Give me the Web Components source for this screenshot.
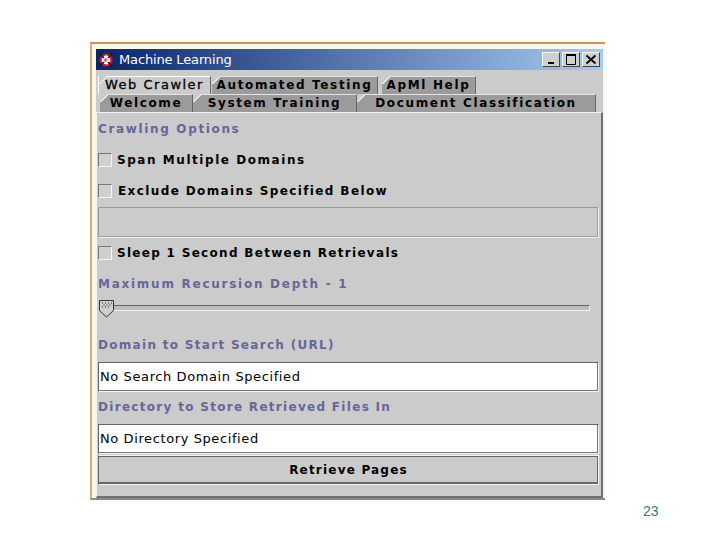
<!DOCTYPE html>
<html>
<head>
<meta charset="utf-8">
<title>Machine Learning</title>
<style>
  html, body { margin: 0; background: #fff; }
  body { width: 720px; height: 540px; overflow: hidden; font-family: "DejaVu Sans", sans-serif; }
  .slide { display: flex; flex-direction: column; padding: 42px 0 0 90px; }
  .number { margin: 3px 0 0 553px; font: 14px/16px "Liberation Sans", sans-serif; color: #2e7f86; }
</style>
</head>
<body>
<div class="slide">
  <ml-window title-text="Machine Learning">
    <ml-tabs>
      <ml-tab slot="top" selected style="margin-left:2px;width:113px">Web Crawler</ml-tab>
      <ml-tab slot="top" style="margin-left:1px;width:166px">Automated Testing</ml-tab>
      <ml-tab slot="top" style="margin-left:4px;width:94px">ApMl Help</ml-tab>
      <ml-tab slot="bottom" style="margin-left:4px;width:93px">Welcome</ml-tab>
      <ml-tab slot="bottom" style="width:164px">System Training</ml-tab>
      <ml-tab slot="bottom" style="width:239px">Document Classification</ml-tab>
    </ml-tabs>
    <ml-panel>
      <ml-heading style="height:31px;letter-spacing:1.65px">Crawling Options</ml-heading>
      <ml-check style="letter-spacing:1.55px">Span Multiple Domains</ml-check>
      <ml-check gap="6" style="letter-spacing:1.39px;margin-bottom:1px">Exclude Domains Specified Below</ml-check>
      <ml-field disabled></ml-field>
      <ml-check style="height:30px;letter-spacing:1.3px">Sleep 1 Second Between Retrievals</ml-check>
      <ml-heading style="height:31px;letter-spacing:1.74px">Maximum Recursion Depth - 1</ml-heading>
      <ml-slider style="margin-top:1px"></ml-slider>
      <ml-heading style="height:32px;margin-top:11px;letter-spacing:1.3px">Domain to Start Search (URL)</ml-heading>
      <ml-field style="margin-top:1px;height:30px">No Search Domain Specified</ml-field>
      <ml-heading style="height:30px;letter-spacing:1.3px">Directory to Store Retrieved Files In</ml-heading>
      <ml-field style="margin-top:2px;height:30px">No Directory Specified</ml-field>
      <ml-button>Retrieve Pages</ml-button>
    </ml-panel>
  </ml-window>
  <div class="number">23</div>
</div>

<script>
function shadow(el, html) {
  el.attachShadow({ mode: "open" }).innerHTML = html;
}

class MlWindow extends HTMLElement {
  connectedCallback() {
    const title = this.getAttribute("title-text");
    shadow(this, `
    <style>
      :host { display: block; width: 515px; height: 458px; box-sizing: border-box; background: #fbf6ea;
        border-top: 2px solid #c4965c; border-left: 2px solid #d3ac78; border-bottom: 2px solid #8a8a8a; }
      .inner { height: 100%; box-sizing: border-box; padding: 5px 2px 0 4px; display: flex; flex-direction: column; }
      .bar { height: 21px; flex: none; display: flex; align-items: center; gap: 2px; padding: 0 3px 0 2px;
        background: linear-gradient(90deg, #0a246a, #a6caf0); }
      .bar svg.logo { margin-right: 3px; }
      .name { flex: 1; color: #fff; font: 13px "DejaVu Sans", sans-serif; letter-spacing: -.15px; }
      .btn { width: 18px; height: 15px; box-sizing: border-box; background: #cfcfcf;
        border: 1px solid; border-color: #f4f4f4 #444 #444 #f4f4f4; display: flex; }
      .body { flex: 1; background: #cbcbcb; display: flex; flex-direction: column; min-height: 0; }
    </style>
    <div class="inner">
      <div class="bar">
        <svg class="logo" width="16" height="16" viewBox="0 0 16 16">
          <circle cx="8" cy="8" r="6.500" fill="#c81c28"/>
          <path d="M8 3 11.500 5 12.500 9 9.500 12.500 6 12 3.500 9 4.500 5Z" fill="#fff"/>
          <path d="M8 5.500 10 8 7 10.500 5.500 8Z" fill="#e8606a"/>
          <path d="M1.500 1.500 6 6M14.500 1.500 10 6M1.500 14.500 6 10M14.500 14.500 10 10" stroke="#3a0c14" stroke-width="1.500"/>
        </svg>
        <span class="name">${title}</span>
        <span class="btn"><svg width="16" height="13" viewBox="0 0 16 13"><path d="M5 9h6v2H5z" fill="#000"/></svg></span>
        <span class="btn"><svg width="16" height="13" viewBox="0 0 16 13"><path d="M3.500 1.500h9v10h-9z" fill="none" stroke="#000"/><path d="M3 1h10v2H3z" fill="#000"/></svg></span>
        <span class="btn"><svg width="16" height="13" viewBox="0 0 16 13"><path d="M3.500 2.500l9 8M12.500 2.500l-9 8" stroke="#000" stroke-width="1.800"/></svg></span>
      </div>
      <div class="body"><slot></slot></div>
    </div>`);
  }
}

class MlTabs extends HTMLElement {
  connectedCallback() {
    shadow(this, `
    <style>
      :host { display: block; padding-top: 6px; flex: none; }
      .row { display: flex; height: 18px; }
    </style>
    <div class="row"><slot name="top"></slot></div>
    <div class="row"><slot name="bottom"></slot></div>`);
  }
}

class MlTab extends HTMLElement {
  connectedCallback() {
    shadow(this, `
    <style>
      :host { display: block; position: relative; box-sizing: border-box; height: 100%; background: #9b9b9b; color: #000;
        border-top: 1px solid #e4e4e4; border-right: 1px solid #666;
        font: bold 12px/16px "DejaVu Sans", sans-serif; letter-spacing: 1.65px; text-align: center; white-space: nowrap; }
      :host::before { content: ""; position: absolute; left: 0; top: -1px; width: 8px; height: 8px;
        background: linear-gradient(135deg, #cbcbcb 46%, #e8e8e8 46%, #e8e8e8 58%, transparent 58%); }
      :host([selected]) { background: #cbcbcb; border-top-color: #fff; border-left: 1px solid #fff; font-size: 13px; font-weight: normal;
        letter-spacing: 1.5px; -webkit-text-stroke: .3px #000; }
    </style>
    <slot></slot>`);
  }
}

class MlPanel extends HTMLElement {
  connectedCallback() {
    shadow(this, `
    <style>
      :host { display: flex; flex-direction: column; flex: 1; box-sizing: border-box; padding: 0 2px 0 1px;
        border-top: 1px solid #f4f4f4; border-left: 1px solid #f4f4f4; border-right: 2px solid #6f6f6f; border-bottom: 2px solid #6f6f6f; min-height: 0; }
    </style>
    <slot></slot>`);
  }
}

class MlHeading extends HTMLElement {
  connectedCallback() {
    shadow(this, `
    <style>
      :host { display: flex; align-items: center; flex: none; color: #66669a;
        font: bold 12px "DejaVu Sans", sans-serif; letter-spacing: 1.5px; white-space: nowrap; }
    </style>
    <slot></slot>`);
  }
}

class MlCheck extends HTMLElement {
  connectedCallback() {
    const gap = this.getAttribute("gap") || 5;
    shadow(this, `
    <style>
      :host { display: flex; align-items: center; height: 31px; flex: none; color: #000;
        font: bold 12px "DejaVu Sans", sans-serif; letter-spacing: 1.5px; white-space: nowrap; }
      .box { width: 14px; height: 14px; box-sizing: border-box; margin-right: ${gap}px; flex: none;
        border: 1px solid; border-color: #777 #f4f4f4 #f4f4f4 #777; background: #d0d0d0; }
    </style>
    <span class="box"></span><slot></slot>`);
  }
}

class MlField extends HTMLElement {
  connectedCallback() {
    shadow(this, `
    <style>
      :host { display: flex; align-items: center; height: 31px; box-sizing: border-box; flex: none; padding: 0 0 2px 1px;
        background: #fff; color: #000; border: 1px solid; border-color: #666 #f4f4f4 #f4f4f4 #666;
        box-shadow: inset -1px -1px 0 #777; font: 13px "DejaVu Sans", sans-serif; letter-spacing: .6px; white-space: nowrap; }
      :host([disabled]) { background: #cbcbcb; border-color: #999 #f0f0f0 #f0f0f0 #999; box-shadow: inset -1px -1px 0 #a0a0a0; }
    </style>
    <slot></slot>`);
  }
}

class MlSlider extends HTMLElement {
  connectedCallback() {
    shadow(this, `
    <style>
      :host { display: block; position: relative; height: 18px; flex: none; }
      .track { position: absolute; left: 14px; right: 9px; top: 5px; height: 6px; box-sizing: border-box;
        background: #bdbdbd; border: 1px solid; border-color: #666 #eee #f2f2f2 #666; }
      svg { position: absolute; left: 0; top: 0; }
    </style>
    <div class="track"></div>
    <svg width="17" height="18" viewBox="0 0 17 18">
      <path d="M1.500 .5h14v10l-7 6.500-7-6.500z" fill="#cfcfcf" stroke="#333"/>
      <path d="M4 3h1M7 3h1M10 3h1M13 3h1M5.500 5h1M8.500 5h1M11.500 5h1M4 7h1M7 7h1M10 7h1" stroke="#222"/>
    </svg>`);
  }
}

class MlButton extends HTMLElement {
  connectedCallback() {
    shadow(this, `
    <style>
      :host { display: flex; align-items: center; justify-content: center; height: 30px; box-sizing: border-box; flex: none;
        margin-top: 1px; background: #cbcbcb; color: #000; border: 1px solid; border-color: #f4f4f4 #f4f4f4 #f4f4f4 #666;
        box-shadow: inset 0 1px 0 #666, inset -1px -2px 0 #666; font: bold 12px "DejaVu Sans", sans-serif; letter-spacing: 1.2px; }
    </style>
    <slot></slot>`);
  }
}

customElements.define("ml-window", MlWindow);
customElements.define("ml-tabs", MlTabs);
customElements.define("ml-tab", MlTab);
customElements.define("ml-panel", MlPanel);
customElements.define("ml-heading", MlHeading);
customElements.define("ml-check", MlCheck);
customElements.define("ml-field", MlField);
customElements.define("ml-slider", MlSlider);
customElements.define("ml-button", MlButton);
</script>
</body>
</html>
